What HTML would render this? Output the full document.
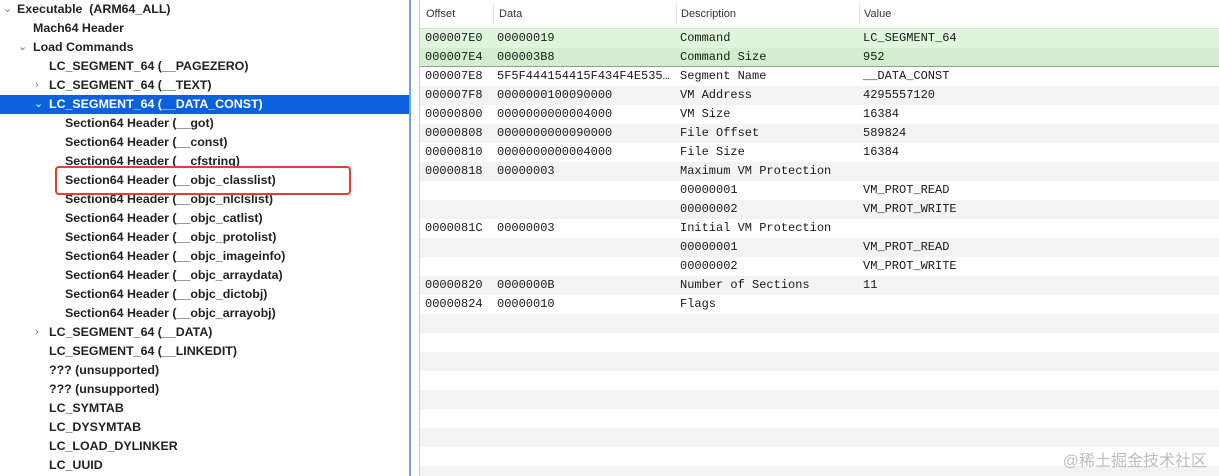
<!DOCTYPE html>
<html><head><meta charset="utf-8"><style>
*{margin:0;padding:0;box-sizing:border-box}
html,body{width:1219px;height:476px;overflow:hidden}
body{background:#fff;position:relative;font-family:"Liberation Sans",sans-serif}
.l{position:absolute;left:0;top:0;width:409px;height:476px;background:#fff}
.r{position:absolute;height:19px;left:0;width:409px;font-weight:bold;font-size:12.4px;color:#222;line-height:19px;white-space:nowrap}
.r.sel{background:#0b62dc;color:#fff}
.ar{position:absolute;font-weight:normal;color:#777;font-size:11px}
.sep1{position:absolute;left:409px;top:0;width:2px;height:476px;background:#6ea3e6}
.sep2{position:absolute;left:419px;top:0;width:1px;height:476px;background:#c8c8c8}
.t{position:absolute;left:420px;top:0;width:799px;height:476px;overflow:hidden}
.hd{position:absolute;top:0;left:0;width:799px;height:29px;border-bottom:1px solid #ddd;font-size:11px;color:#333;line-height:29px}
.hd span{position:absolute}
.vl{position:absolute;top:5px;width:1px;height:19px;background:#ddd}
.row{position:absolute;left:0;width:799px;height:19px;font-family:"Liberation Mono",monospace;font-size:12px;color:#1a1a1a;line-height:19px;white-space:pre}
.row span{position:absolute}
.g{background:#f3f3f3}
.box{position:absolute;left:55px;top:166px;width:296px;height:29px;border:2px solid #e2412c;border-radius:4px}
.wm{position:absolute;right:12px;top:447px;font-family:"Liberation Sans","Noto Sans CJK SC",sans-serif;font-size:16px;color:#bdbdbd}
</style></head><body>
<div class="l">
<div class="r" style="top:0"><span class="ar" style="left:3px">⌄</span><span style="position:absolute;left:17px">Executable&nbsp; (ARM64_ALL)</span></div>
<div class="r" style="top:19px"><span style="position:absolute;left:33px">Mach64 Header</span></div>
<div class="r" style="top:38px"><span class="ar" style="left:18px">⌄</span><span style="position:absolute;left:33px">Load Commands</span></div>
<div class="r" style="top:57px"><span style="position:absolute;left:49px">LC_SEGMENT_64 (__PAGEZERO)</span></div>
<div class="r" style="top:76px"><span class="ar" style="left:35px">›</span><span style="position:absolute;left:49px">LC_SEGMENT_64 (__TEXT)</span></div>
<div class="r sel" style="top:95px"><span class="ar" style="left:34px;color:#fff">⌄</span><span style="position:absolute;left:49px">LC_SEGMENT_64 (__DATA_CONST)</span></div>
<div class="r" style="top:114px"><span style="position:absolute;left:65px">Section64 Header (__got)</span></div>
<div class="r" style="top:133px"><span style="position:absolute;left:65px">Section64 Header (__const)</span></div>
<div class="r" style="top:152px"><span style="position:absolute;left:65px">Section64 Header (__cfstring)</span></div>
<div class="r" style="top:171px"><span style="position:absolute;left:65px">Section64 Header (__objc_classlist)</span></div>
<div class="r" style="top:190px"><span style="position:absolute;left:65px">Section64 Header (__objc_nlclslist)</span></div>
<div class="r" style="top:209px"><span style="position:absolute;left:65px">Section64 Header (__objc_catlist)</span></div>
<div class="r" style="top:228px"><span style="position:absolute;left:65px">Section64 Header (__objc_protolist)</span></div>
<div class="r" style="top:247px"><span style="position:absolute;left:65px">Section64 Header (__objc_imageinfo)</span></div>
<div class="r" style="top:266px"><span style="position:absolute;left:65px">Section64 Header (__objc_arraydata)</span></div>
<div class="r" style="top:285px"><span style="position:absolute;left:65px">Section64 Header (__objc_dictobj)</span></div>
<div class="r" style="top:304px"><span style="position:absolute;left:65px">Section64 Header (__objc_arrayobj)</span></div>
<div class="r" style="top:323px"><span class="ar" style="left:35px">›</span><span style="position:absolute;left:49px">LC_SEGMENT_64 (__DATA)</span></div>
<div class="r" style="top:342px"><span style="position:absolute;left:49px">LC_SEGMENT_64 (__LINKEDIT)</span></div>
<div class="r" style="top:361px"><span style="position:absolute;left:49px">??? (unsupported)</span></div>
<div class="r" style="top:380px"><span style="position:absolute;left:49px">??? (unsupported)</span></div>
<div class="r" style="top:399px"><span style="position:absolute;left:49px">LC_SYMTAB</span></div>
<div class="r" style="top:418px"><span style="position:absolute;left:49px">LC_DYSYMTAB</span></div>
<div class="r" style="top:437px"><span style="position:absolute;left:49px">LC_LOAD_DYLINKER</span></div>
<div class="r" style="top:456px"><span style="position:absolute;left:49px">LC_UUID</span></div>
<div class="box"></div>
</div>
<div class="sep1"></div><div class="sep2"></div>
<div class="t">
<div class="hd"><span style="left:6px">Offset</span><span style="left:79px">Data</span><span style="left:261px">Description</span><span style="left:444px">Value</span>
<div class="vl" style="left:73px"></div><div class="vl" style="left:256px"></div><div class="vl" style="left:439px"></div></div>
<div class="row" style="top:29px;background:#dff5dc"><span style="left:5px">000007E0</span><span style="left:77px">00000019</span><span style="left:260px">Command</span><span style="left:443px">LC_SEGMENT_64</span></div>
<div class="row" style="top:48px;background:#d2eecf;border-bottom:1px solid #999"><span style="left:5px">000007E4</span><span style="left:77px">000003B8</span><span style="left:260px">Command Size</span><span style="left:443px">952</span></div>
<div class="row" style="top:67px"><span style="left:5px">000007E8</span><span style="left:77px">5F5F444154415F434F4E535…</span><span style="left:260px">Segment Name</span><span style="left:443px">__DATA_CONST</span></div>
<div class="row g" style="top:86px"><span style="left:5px">000007F8</span><span style="left:77px">0000000100090000</span><span style="left:260px">VM Address</span><span style="left:443px">4295557120</span></div>
<div class="row" style="top:105px"><span style="left:5px">00000800</span><span style="left:77px">0000000000004000</span><span style="left:260px">VM Size</span><span style="left:443px">16384</span></div>
<div class="row g" style="top:124px"><span style="left:5px">00000808</span><span style="left:77px">0000000000090000</span><span style="left:260px">File Offset</span><span style="left:443px">589824</span></div>
<div class="row" style="top:143px"><span style="left:5px">00000810</span><span style="left:77px">0000000000004000</span><span style="left:260px">File Size</span><span style="left:443px">16384</span></div>
<div class="row g" style="top:162px"><span style="left:5px">00000818</span><span style="left:77px">00000003</span><span style="left:260px">Maximum VM Protection</span></div>
<div class="row" style="top:181px"><span style="left:260px">00000001</span><span style="left:443px">VM_PROT_READ</span></div>
<div class="row g" style="top:200px"><span style="left:260px">00000002</span><span style="left:443px">VM_PROT_WRITE</span></div>
<div class="row" style="top:219px"><span style="left:5px">0000081C</span><span style="left:77px">00000003</span><span style="left:260px">Initial VM Protection</span></div>
<div class="row g" style="top:238px"><span style="left:260px">00000001</span><span style="left:443px">VM_PROT_READ</span></div>
<div class="row" style="top:257px"><span style="left:260px">00000002</span><span style="left:443px">VM_PROT_WRITE</span></div>
<div class="row g" style="top:276px"><span style="left:5px">00000820</span><span style="left:77px">0000000B</span><span style="left:260px">Number of Sections</span><span style="left:443px">11</span></div>
<div class="row" style="top:295px"><span style="left:5px">00000824</span><span style="left:77px">00000010</span><span style="left:260px">Flags</span></div>
<div class="row g" style="top:314px"></div>
<div class="row g" style="top:352px"></div>
<div class="row g" style="top:390px"></div>
<div class="row g" style="top:428px"></div>
<div class="row g" style="top:466px;height:10px"></div>
</div>
<div class="wm">@稀土掘金技术社区</div>
</body></html>
